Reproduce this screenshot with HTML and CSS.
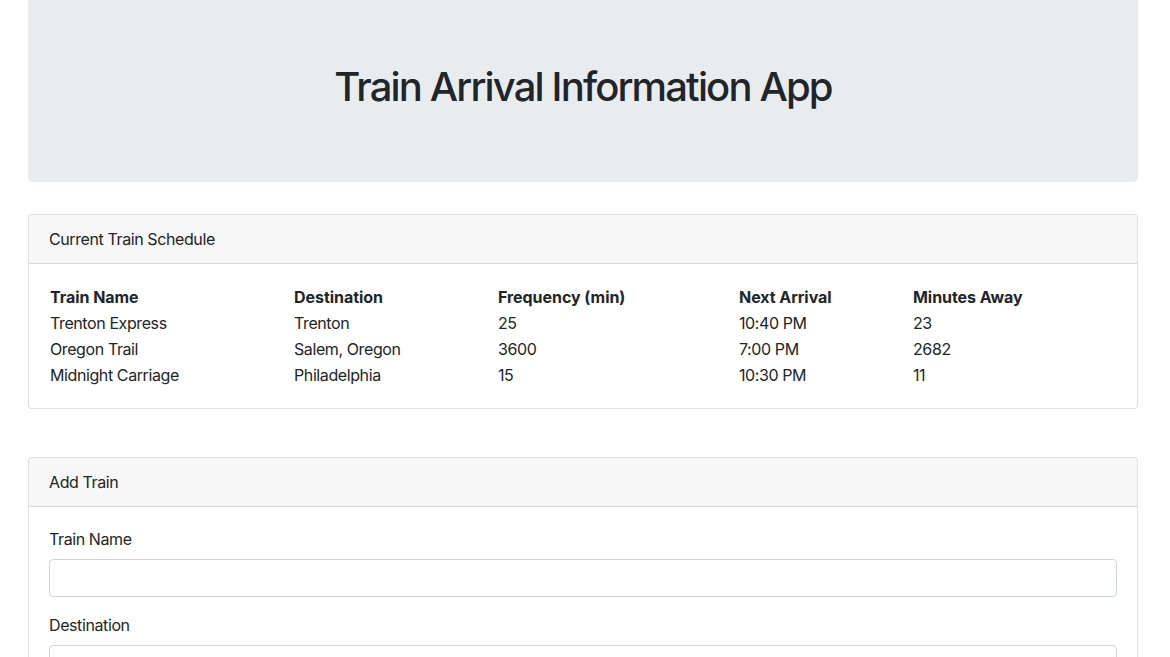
FILE: index.html
```html
<!DOCTYPE html>
<html lang="en">
<head>
<meta charset="utf-8">
<title>Train Arrival Information App</title>
<link rel="stylesheet" href="styles.css">
</head>
<body>
<div class="container">
  <div class="jumbotron">
    <h1 class="title">Train Arrival Information App</h1>
  </div>

  <div class="card">
    <div class="card-header">Current Train Schedule</div>
    <div class="card-body">
      <table class="schedule">
        <colgroup>
          <col class="c1"><col class="c2"><col class="c3"><col class="c4"><col class="c5">
        </colgroup>
        <thead>
          <tr><th>Train Name</th><th>Destination</th><th>Frequency (min)</th><th>Next Arrival</th><th>Minutes Away</th></tr>
        </thead>
        <tbody>
          <tr><td>Trenton Express</td><td>Trenton</td><td>25</td><td>10:40 PM</td><td>23</td></tr>
          <tr><td>Oregon Trail</td><td>Salem, Oregon</td><td>3600</td><td>7:00 PM</td><td>2682</td></tr>
          <tr><td>Midnight Carriage</td><td>Philadelphia</td><td>15</td><td>10:30 PM</td><td>11</td></tr>
        </tbody>
      </table>
    </div>
  </div>

  <div class="card card-spaced">
    <div class="card-header">Add Train</div>
    <div class="card-body">
      <form>
        <div class="form-group">
          <label for="train-name">Train Name</label>
          <input id="train-name" class="form-control" type="text">
        </div>
        <div class="form-group">
          <label for="destination">Destination</label>
          <input id="destination" class="form-control" type="text">
        </div>
      </form>
    </div>
  </div>
</div>
</body>
</html>
```

FILE: styles.css
```css
* { box-sizing: border-box; }

html, body {
  margin: 0;
  padding: 0;
}

body {
  font-family: Inter, "Noto Sans", "Liberation Sans", sans-serif;
  font-size: 16px;
  line-height: 1.5;
  color: #212529;
  background: #fff;
  letter-spacing: -0.4px;
}

.container {
  width: 1110px;
  margin-left: 28px;
}

.jumbotron {
  background: #e9ecef;
  padding: 63px 32px 63px;
  border-radius: 0 0 4.8px 4.8px;
  margin-bottom: 32px;
}

.title {
  margin: 0 0 8px;
  font-size: 40px;
  line-height: 1.2;
  font-weight: 500;
  text-align: center;
  letter-spacing: -1.85px;
}

.card {
  border: 1px solid rgba(0, 0, 0, 0.125);
  border-radius: 4px;
  background: #fff;
}

.card-spaced {
  margin-top: 48px;
}

.card-header {
  padding: 12px 20px;
  background: rgba(0, 0, 0, 0.03);
  border-bottom: 1px solid rgba(0, 0, 0, 0.125);
  border-radius: 3px 3px 0 0;
}

.card-body {
  padding: 20px;
}

.schedule {
  width: 100%;
  border-collapse: collapse;
  table-layout: fixed;
}

.schedule .c1 { width: 244px; }
.schedule .c2 { width: 204px; }
.schedule .c3 { width: 241px; }
.schedule .c4 { width: 174px; }

.schedule th,
.schedule td {
  padding: 1px;
  text-align: left;
  vertical-align: top;
}

.schedule th {
  font-weight: 700;
  letter-spacing: -0.05px;
}

.form-group {
  margin-bottom: 16px;
}

label {
  display: inline-block;
  margin-bottom: 8px;
}

.form-control {
  display: block;
  width: 100%;
  height: 38px;
  padding: 6px 12px;
  font: inherit;
  color: #495057;
  background: #fff;
  border: 1px solid #ced4da;
  border-radius: 4px;
}
```
